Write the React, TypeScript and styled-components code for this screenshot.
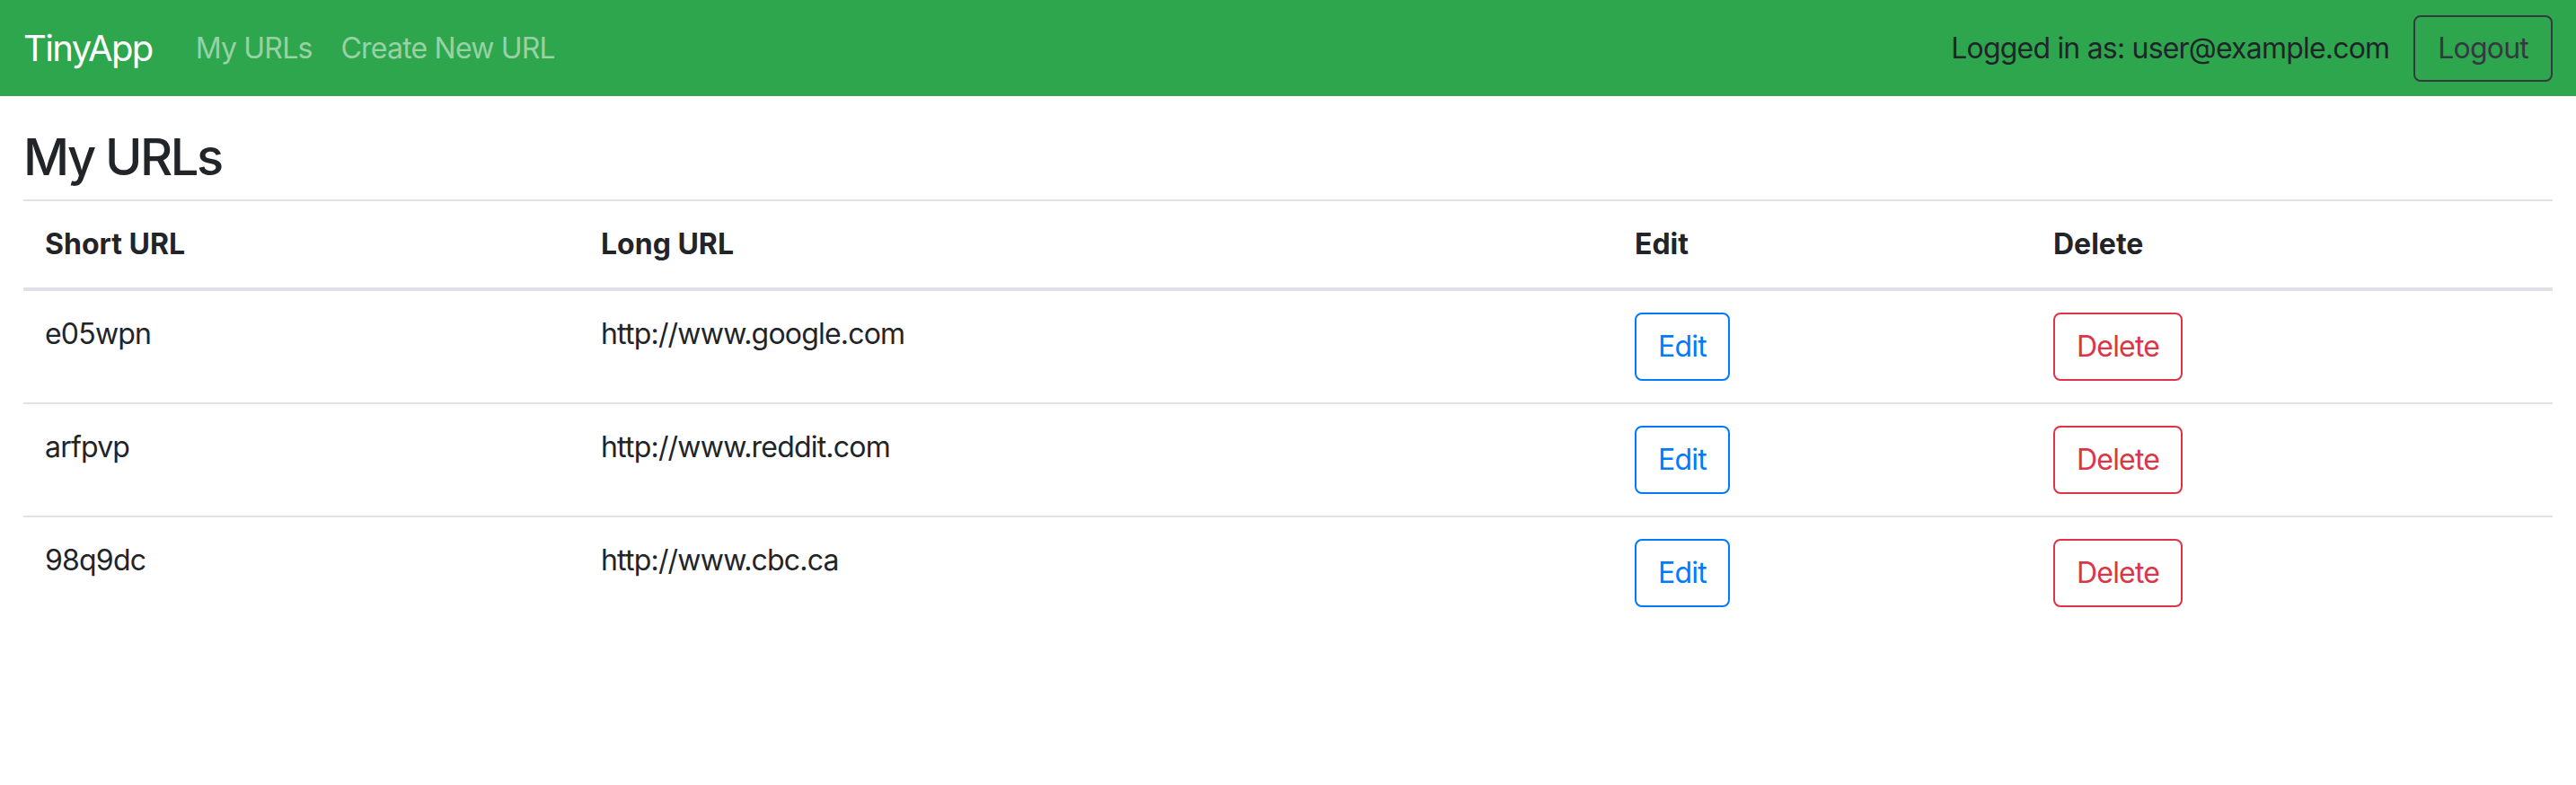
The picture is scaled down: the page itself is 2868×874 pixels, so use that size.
import React from "react";
import styled, { createGlobalStyle } from "styled-components";

const GlobalStyle = createGlobalStyle`
  html, body {
    margin: 0;
    padding: 0;
    background: #ffffff;
    color: #212529;
    font-family: Inter, "Noto Sans", sans-serif;
  }
  * { box-sizing: border-box; }
`;

const Navbar = styled.nav`
  display: flex;
  align-items: center;
  height: 107px;
  padding: 0 26px;
  background: #2ea64e;
`;

const Brand = styled.a`
  font-size: 40px;
  line-height: 60px;
  letter-spacing: -0.04em;
  color: #ffffff;
  text-decoration: none;
  margin-right: 32px;
`;

const NavLink = styled.a`
  font-size: 32px;
  line-height: 48px;
  letter-spacing: -0.025em;
  padding: 0 16px;
  color: rgba(255, 255, 255, 0.5);
  text-decoration: none;
`;

const NavRight = styled.div`
  margin-left: auto;
  display: flex;
  align-items: center;
  gap: 27px;
`;

const NavText = styled.span`
  font-size: 32px;
  line-height: 48px;
  letter-spacing: -0.025em;
  color: #212529;
`;

const Button = styled.button<{ $tone: string }>`
  font-family: inherit;
  font-size: 32px;
  line-height: 48px;
  letter-spacing: -0.025em;
  padding: 12px 24px;
  border: 2px solid ${(p) => p.$tone};
  border-radius: 8px;
  color: ${(p) => p.$tone};
  background: transparent;
  cursor: pointer;
`;

const LogoutButton = styled(Button)`
  padding: 11px 25px;
`;

const Main = styled.main`
  padding: 0 26px;
`;

const Title = styled.h3`
  margin: 35px 0 13px;
  font-size: 56px;
  line-height: 67px;
  font-weight: 500;
  letter-spacing: -0.045em;
  color: #212529;
`;

const Table = styled.table`
  width: 100%;
  border-collapse: collapse;
  table-layout: fixed;
`;

const HeadCell = styled.th`
  text-align: left;
  font-size: 32px;
  line-height: 48px;
  font-weight: 700;
  padding: 24px;
  border-top: 2px solid #dee2e6;
  border-bottom: 4px solid #dee2e6;
  vertical-align: bottom;
`;

const Cell = styled.td`
  font-size: 32px;
  line-height: 48px;
  letter-spacing: -0.025em;
  padding: 24px;
  border-top: 2px solid #dee2e6;
  vertical-align: top;
`;

const rows = [
  { short: "e05wpn", long: "http://www.google.com" },
  { short: "arfpvp", long: "http://www.reddit.com" },
  { short: "98q9dc", long: "http://www.cbc.ca" },
];

export default function App() {
  return (
    <>
      <GlobalStyle />
      <Navbar>
        <Brand href="#">TinyApp</Brand>
        <NavLink href="#">My URLs</NavLink>
        <NavLink href="#">Create New URL</NavLink>
        <NavRight>
          <NavText>Logged in as: user@example.com</NavText>
          <LogoutButton $tone="#343a40">Logout</LogoutButton>
        </NavRight>
      </Navbar>
      <Main>
        <Title>My URLs</Title>
        <Table>
          <colgroup>
            <col style={{ width: 619 }} />
            <col style={{ width: 1151 }} />
            <col style={{ width: 466 }} />
            <col style={{ width: 580 }} />
          </colgroup>
          <thead>
            <tr>
              <HeadCell>Short URL</HeadCell>
              <HeadCell>Long URL</HeadCell>
              <HeadCell>Edit</HeadCell>
              <HeadCell>Delete</HeadCell>
            </tr>
          </thead>
          <tbody>
            {rows.map((r) => (
              <tr key={r.short}>
                <Cell>{r.short}</Cell>
                <Cell>{r.long}</Cell>
                <Cell>
                  <Button $tone="#007bff">Edit</Button>
                </Cell>
                <Cell>
                  <Button $tone="#dc3545">Delete</Button>
                </Cell>
              </tr>
            ))}
          </tbody>
        </Table>
      </Main>
    </>
  );
}
